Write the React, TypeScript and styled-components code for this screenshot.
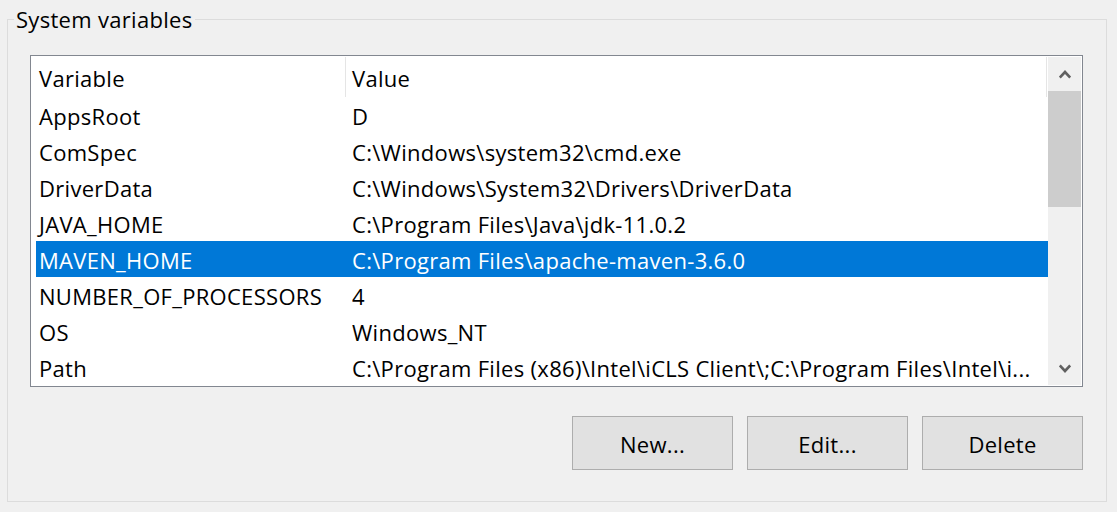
import React from 'react';
import styled, { createGlobalStyle } from 'styled-components';

const GlobalStyle = createGlobalStyle`
  html, body {
    margin: 0;
    padding: 0;
    background: #f0f0f0;
  }
  body {
    width: 1117px;
    height: 512px;
    overflow: hidden;
    font-family: "Open Sans", "Noto Sans", sans-serif;
    font-size: 22px;
    letter-spacing: 0.3px;
    color: #000;
  }
`;

type Variable = { name: string; value: string };

const variables: Variable[] = [
  { name: 'AppsRoot', value: 'D' },
  { name: 'ComSpec', value: 'C:\\Windows\\system32\\cmd.exe' },
  { name: 'DriverData', value: 'C:\\Windows\\System32\\Drivers\\DriverData' },
  { name: 'JAVA_HOME', value: 'C:\\Program Files\\Java\\jdk-11.0.2' },
  { name: 'MAVEN_HOME', value: 'C:\\Program Files\\apache-maven-3.6.0' },
  { name: 'NUMBER_OF_PROCESSORS', value: '4' },
  { name: 'OS', value: 'Windows_NT' },
  {
    name: 'Path',
    value: 'C:\\Program Files (x86)\\Intel\\iCLS Client\\;C:\\Program Files\\Intel\\i...',
  },
];

const SELECTED = 'MAVEN_HOME';

const Page = styled.div`
  padding: 5px 0 0 7px;
`;

const Group = styled.fieldset`
  margin: 0;
  padding: 0;
  width: 1100px;
  box-sizing: border-box;
  border: 1px solid #dcdcdc;
  min-inline-size: 0;
`;

const Legend = styled.legend`
  margin-left: 6px;
  padding: 0 3px 0 2px;
  line-height: 28px;
`;

const GroupBody = styled.div`
  padding: 22px 23px 31px 22px;
`;

const ListBox = styled.div`
  display: flex;
  height: 332px;
  box-sizing: border-box;
  border: 1px solid #828790;
  padding: 1px;
  background: #fff;
`;

const ListArea = styled.div`
  flex: 1;
  padding-left: 4px;
  overflow: hidden;
`;

const HeaderRow = styled.div`
  display: grid;
  grid-template-columns: 310px 701px 1fr;
  height: 40px;
`;

const HeaderCell = styled.div<{ $pad: number }>`
  display: flex;
  align-items: center;
  padding: 2px 0 0 ${({ $pad }) => $pad}px;
  border-right: 1px solid #e5e5e5;
  white-space: nowrap;
`;

const Row = styled.div<{ $selected?: boolean }>`
  display: grid;
  grid-template-columns: 316px 1fr;
  height: 36px;
  background: ${({ $selected }) => ($selected ? '#0078d7' : 'transparent')};
  color: ${({ $selected }) => ($selected ? '#fff' : '#000')};
`;

const Cell = styled.div<{ $pad?: number }>`
  display: flex;
  align-items: center;
  padding: 2px 8px 0 ${({ $pad }) => $pad ?? 0}px;
  white-space: nowrap;
  overflow: hidden;
`;

const ScrollBar = styled.div`
  display: flex;
  flex-direction: column;
  width: 33px;
  background: #f0f0f0;
`;

const ArrowButton = styled.div`
  display: flex;
  align-items: center;
  justify-content: center;
  height: 34px;
`;

const Thumb = styled.div`
  height: 116px;
  background: #cdcdcd;
`;

const Track = styled.div`
  flex: 1;
`;

const ButtonRow = styled.div`
  display: flex;
  justify-content: flex-end;
  gap: 14px;
  margin-top: 29px;
`;

const Button = styled.button`
  width: 161px;
  height: 54px;
  box-sizing: border-box;
  margin: 0;
  padding: 2px 0 0;
  border: 1px solid #adadad;
  background: #e1e1e1;
  color: #000;
  font: inherit;
  letter-spacing: inherit;
`;

const Chevron: React.FC<{ down?: boolean }> = ({ down }) => (
  <svg width="12" height="9" viewBox="0 0 12 9">
    <polyline
      points={down ? '0.8,1.5 6,7 11.2,1.5' : '0.8,7.5 6,2 11.2,7.5'}
      fill="none"
      stroke="#606060"
      strokeWidth="2.6"
    />
  </svg>
);

const App: React.FC = () => (
  <>
    <GlobalStyle />
    <Page>
      <Group>
        <Legend>System variables</Legend>
        <GroupBody>
          <ListBox>
            <ListArea>
              <HeaderRow>
                <HeaderCell $pad={3}>Variable</HeaderCell>
                <HeaderCell $pad={6}>Value</HeaderCell>
              </HeaderRow>
              {variables.map((v) => (
                <Row key={v.name} $selected={v.name === SELECTED}>
                  <Cell $pad={3}>{v.name}</Cell>
                  <Cell>{v.value}</Cell>
                </Row>
              ))}
            </ListArea>
            <ScrollBar>
              <ArrowButton>
                <Chevron />
              </ArrowButton>
              <Thumb />
              <Track />
              <ArrowButton>
                <Chevron down />
              </ArrowButton>
            </ScrollBar>
          </ListBox>
          <ButtonRow>
            <Button>New...</Button>
            <Button>Edit...</Button>
            <Button>Delete</Button>
          </ButtonRow>
        </GroupBody>
      </Group>
    </Page>
  </>
);

export default App;
